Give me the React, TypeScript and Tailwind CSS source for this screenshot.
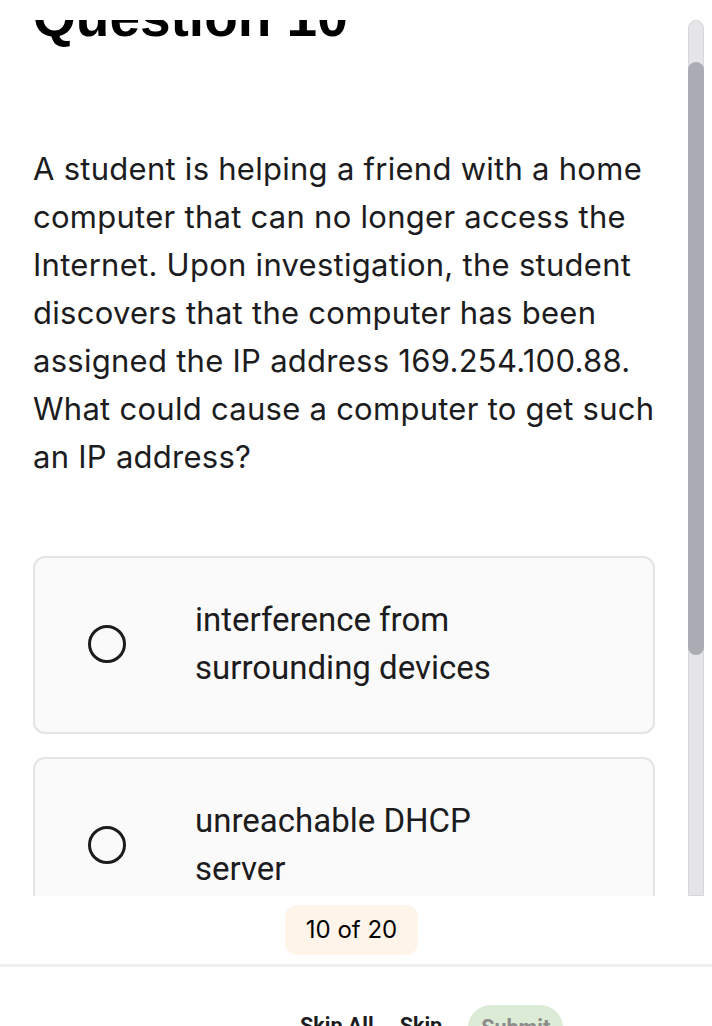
import React from 'react';

const options = [
  'interference from surrounding devices',
  'unreachable DHCP server',
  'static IP address configured wrongly',
  'disabled network adapter',
];

function Radio() {
  return <span className="block w-[38px] h-[38px] shrink-0 rounded-full border-[3px] border-[#1c1c1e]" />;
}

export default function App() {
  return (
    <div className="w-[712px] h-[1026px] overflow-hidden bg-white text-[#1c1c1e]">
      {/* scroll area, below a blank 20px header */}
      <div className="flex h-[896px] pt-5">
        <div className="flex-1 overflow-hidden">
          <div className="pl-[33px] pr-[33px]">
            <h1
              className="mt-[-33px] h-[60px] text-[55px] leading-[60px] font-bold text-black"
              style={{ fontFamily: '"Liberation Sans", Arial, sans-serif' }}
            >
              Question 10
            </h1>
            <p
              className="mt-[98px] w-[634px] text-[31px] leading-[48px] tracking-[0.27px]"
              style={{ fontFamily: 'Inter, "Noto Sans", sans-serif' }}
            >
              A student is helping a friend with a home computer that can no longer access the Internet. Upon
              investigation, the student discovers that the computer has been assigned the IP address
              169.254.100.88. What could cause a computer to get such an IP address?
            </p>
            <div className="mt-[75px] flex flex-col gap-[23px]">
              {options.map((o) => (
                <div
                  key={o}
                  className="flex items-center rounded-xl border-2 border-[#e3e3e8] bg-[#fafafa] pl-[53px] pr-6 pt-[38px] pb-[40px]"
                >
                  <Radio />
                  <span
                    className="ml-[69px] w-[330px] text-[33px] leading-[48px] text-[#1c1c1e]"
                    style={{ fontFamily: 'Roboto, "Liberation Sans", sans-serif' }}
                  >
                    {o}
                  </span>
                </div>
              ))}
            </div>
          </div>
        </div>
        {/* scrollbar */}
        <div className="w-4 mr-2 flex flex-col">
          <div className="flex-1 rounded-t-full border border-[#d6d6db] bg-[#e4e4e9] pt-[41px]">
            <div className="-mx-px h-[593px] rounded-full bg-[#a9acb2]" />
          </div>
        </div>
      </div>

      {/* footer */}
      <div className="flex justify-center pl-[2px] pr-[11px] mt-[9px]">
        <div
          className="flex h-[50px] w-[133px] items-center justify-center rounded-xl bg-[#fef4ea] text-[24px] text-black"
          style={{ fontFamily: 'Inter, "Noto Sans", sans-serif' }}
        >
          10 of 20
        </div>
      </div>
      <div className="mt-[9px] h-[3px] bg-[#efefef]" />
      <div
        className="mt-[38px] flex items-start pl-[300px]"
        style={{ fontFamily: 'Roboto, "Liberation Sans", sans-serif' }}
      >
        <span className="mt-[10px] text-[21.5px] font-bold leading-none text-[#1c1c1e]">Skip All</span>
        <span className="ml-[26px] mt-[10px] text-[21.5px] font-bold leading-none text-[#1c1c1e]">Skip</span>
        <span className="ml-[26px] flex h-[46px] w-[95px] items-center justify-center rounded-full bg-[#dcebd5] text-[21.5px] font-bold text-[#8c8c8c]">
          Submit
        </span>
      </div>
    </div>
  );
}
